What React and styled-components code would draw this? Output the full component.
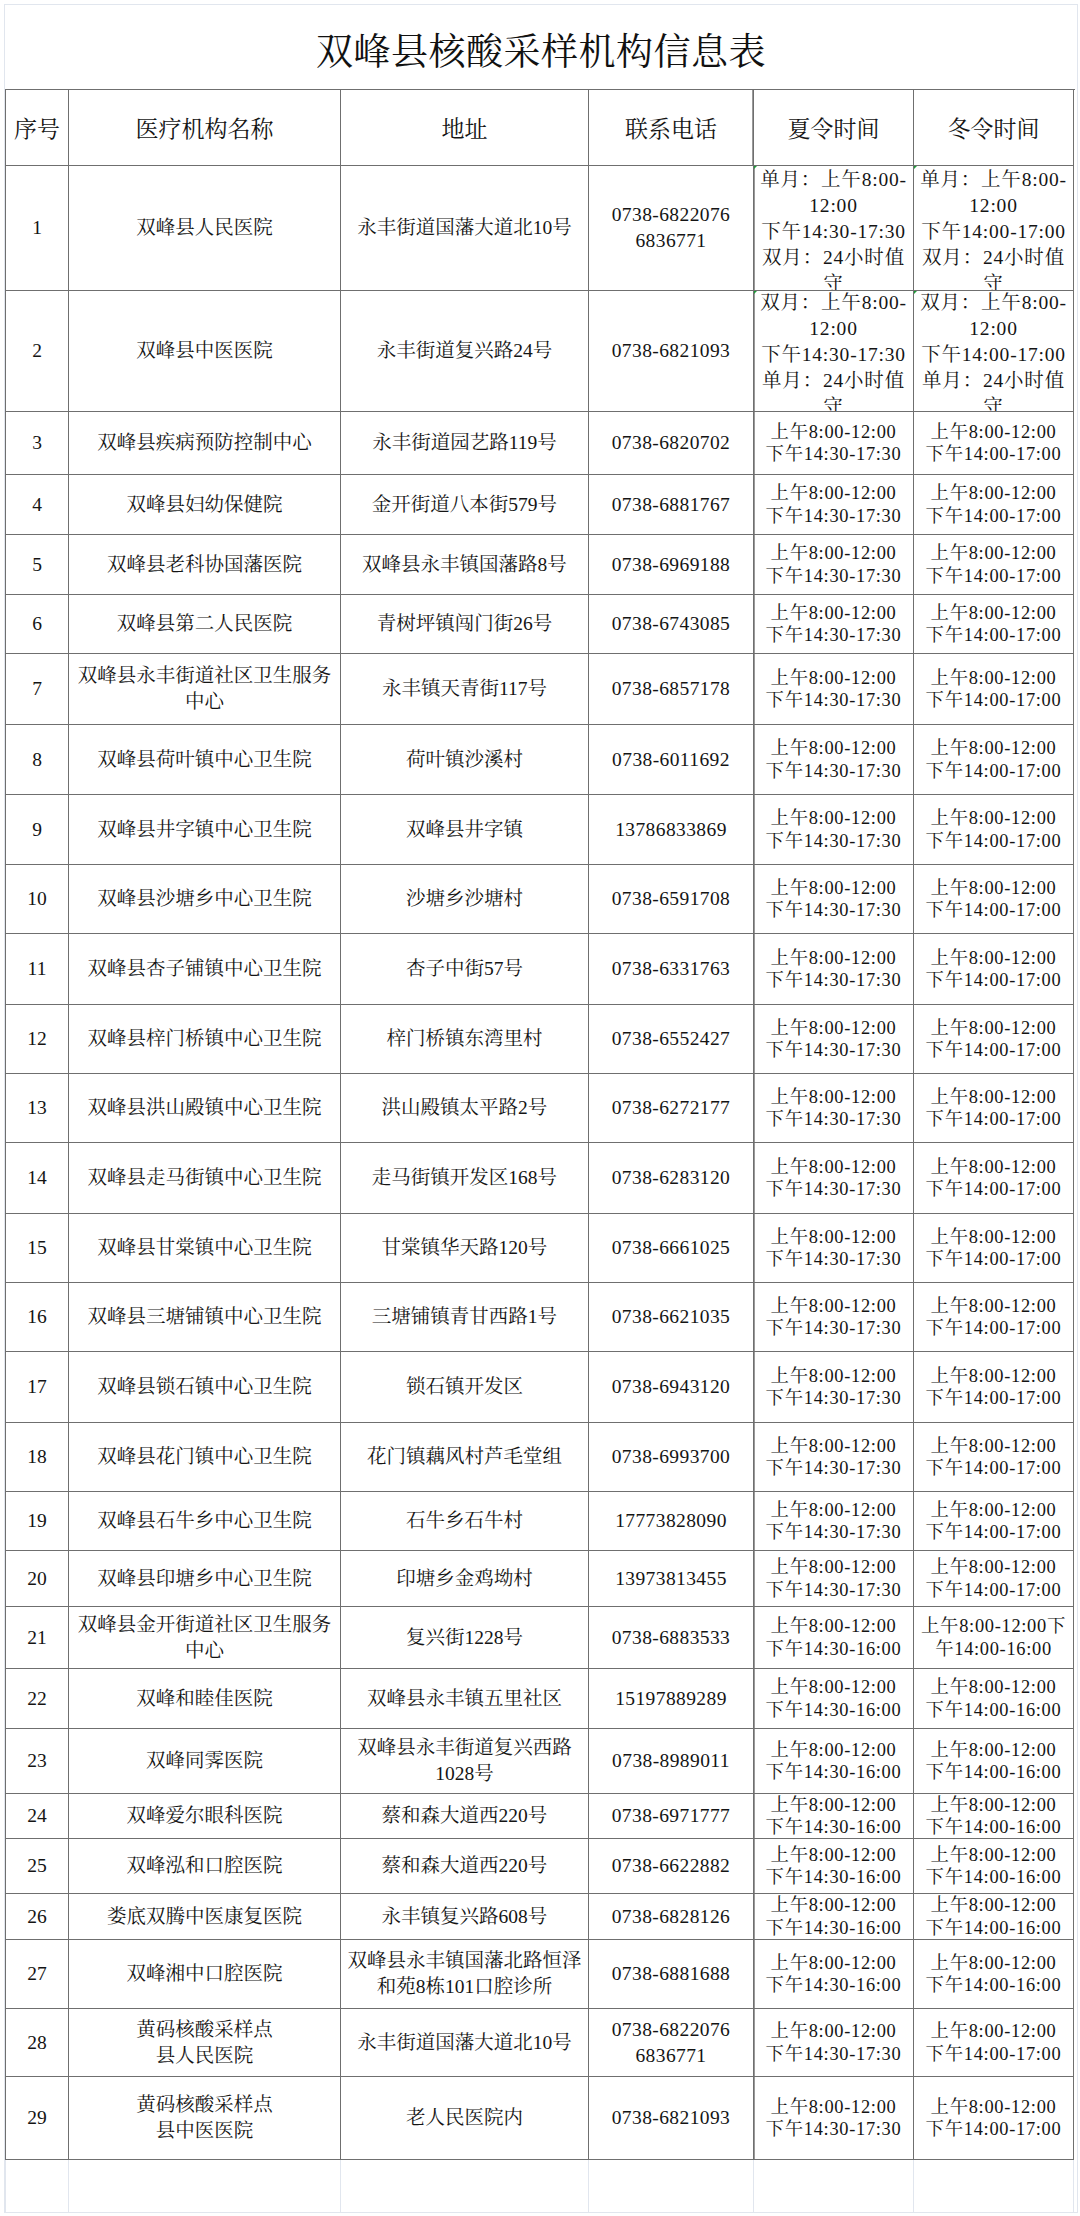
import styled, { createGlobalStyle } from "styled-components";

const GlobalStyle = createGlobalStyle`
  html, body {
    margin: 0;
    padding: 0;
    background: #ffffff;
  }
  body {
    font-family: "Liberation Serif", "Noto Serif CJK SC", "Noto Sans CJK SC", serif;
    color: #111111;
  }
`;

const COLS = "63px 272px 248px 165px 160px 160px";
const LINE = "#6f6f6f";
const FAINT = "#e1e6ee";

const SUMMER = ["上午8:00-12:00", "下午14:30-17:30"];
const WINTER = ["上午8:00-12:00", "下午14:00-17:00"];
const SUMMER_4 = ["上午8:00-12:00", "下午14:30-16:00"];
const WINTER_4 = ["上午8:00-12:00", "下午14:00-16:00"];

const rows = [
  {
    h: 125,
    name: ["双峰县人民医院"],
    addr: ["永丰街道国藩大道北10号"],
    tel: ["0738-6822076", "6836771"],
    summer: ["单月：上午8:00-", "12:00", "下午14:30-17:30", "双月：24小时值", "守"],
    winter: ["单月：上午8:00-", "12:00", "下午14:00-17:00", "双月：24小时值", "守"],
    loose: true,
  },
  {
    h: 121,
    name: ["双峰县中医医院"],
    addr: ["永丰街道复兴路24号"],
    tel: ["0738-6821093"],
    summer: ["双月：上午8:00-", "12:00", "下午14:30-17:30", "单月：24小时值", "守"],
    winter: ["双月：上午8:00-", "12:00", "下午14:00-17:00", "单月：24小时值", "守"],
    loose: true,
  },
  { h: 63, name: ["双峰县疾病预防控制中心"], addr: ["永丰街道园艺路119号"], tel: ["0738-6820702"] },
  { h: 60, name: ["双峰县妇幼保健院"], addr: ["金开街道八本街579号"], tel: ["0738-6881767"] },
  { h: 60, name: ["双峰县老科协国藩医院"], addr: ["双峰县永丰镇国藩路8号"], tel: ["0738-6969188"] },
  { h: 59, name: ["双峰县第二人民医院"], addr: ["青树坪镇闯门街26号"], tel: ["0738-6743085"] },
  { h: 71, name: ["双峰县永丰街道社区卫生服务", "中心"], addr: ["永丰镇天青街117号"], tel: ["0738-6857178"] },
  { h: 70, name: ["双峰县荷叶镇中心卫生院"], addr: ["荷叶镇沙溪村"], tel: ["0738-6011692"] },
  { h: 70, name: ["双峰县井字镇中心卫生院"], addr: ["双峰县井字镇"], tel: ["13786833869"] },
  { h: 69, name: ["双峰县沙塘乡中心卫生院"], addr: ["沙塘乡沙塘村"], tel: ["0738-6591708"] },
  { h: 71, name: ["双峰县杏子铺镇中心卫生院"], addr: ["杏子中街57号"], tel: ["0738-6331763"] },
  { h: 69, name: ["双峰县梓门桥镇中心卫生院"], addr: ["梓门桥镇东湾里村"], tel: ["0738-6552427"] },
  { h: 69, name: ["双峰县洪山殿镇中心卫生院"], addr: ["洪山殿镇太平路2号"], tel: ["0738-6272177"] },
  { h: 71, name: ["双峰县走马街镇中心卫生院"], addr: ["走马街镇开发区168号"], tel: ["0738-6283120"] },
  { h: 69, name: ["双峰县甘棠镇中心卫生院"], addr: ["甘棠镇华天路120号"], tel: ["0738-6661025"] },
  { h: 69, name: ["双峰县三塘铺镇中心卫生院"], addr: ["三塘铺镇青甘西路1号"], tel: ["0738-6621035"] },
  { h: 71, name: ["双峰县锁石镇中心卫生院"], addr: ["锁石镇开发区"], tel: ["0738-6943120"] },
  { h: 69, name: ["双峰县花门镇中心卫生院"], addr: ["花门镇藕风村芦毛堂组"], tel: ["0738-6993700"] },
  { h: 59, name: ["双峰县石牛乡中心卫生院"], addr: ["石牛乡石牛村"], tel: ["17773828090"] },
  { h: 56, name: ["双峰县印塘乡中心卫生院"], addr: ["印塘乡金鸡坳村"], tel: ["13973813455"] },
  {
    h: 62,
    name: ["双峰县金开街道社区卫生服务", "中心"],
    addr: ["复兴街1228号"],
    tel: ["0738-6883533"],
    summer: SUMMER_4,
    winter: ["上午8:00-12:00下", "午14:00-16:00"],
  },
  { h: 60, name: ["双峰和睦佳医院"], addr: ["双峰县永丰镇五里社区"], tel: ["15197889289"], summer: SUMMER_4, winter: WINTER_4 },
  { h: 65, name: ["双峰同霁医院"], addr: ["双峰县永丰街道复兴西路", "1028号"], tel: ["0738-8989011"], summer: SUMMER_4, winter: WINTER_4 },
  { h: 45, name: ["双峰爱尔眼科医院"], addr: ["蔡和森大道西220号"], tel: ["0738-6971777"], summer: SUMMER_4, winter: WINTER_4 },
  { h: 55, name: ["双峰泓和口腔医院"], addr: ["蔡和森大道西220号"], tel: ["0738-6622882"], summer: SUMMER_4, winter: WINTER_4 },
  { h: 46, name: ["娄底双腾中医康复医院"], addr: ["永丰镇复兴路608号"], tel: ["0738-6828126"], summer: SUMMER_4, winter: WINTER_4 },
  {
    h: 69,
    name: ["双峰湘中口腔医院"],
    addr: ["双峰县永丰镇国藩北路恒泽", "和苑8栋101口腔诊所"],
    tel: ["0738-6881688"],
    summer: SUMMER_4,
    winter: WINTER_4,
  },
  { h: 68, name: ["黄码核酸采样点", "县人民医院"], addr: ["永丰街道国藩大道北10号"], tel: ["0738-6822076", "6836771"] },
  { h: 83, name: ["黄码核酸采样点", "县中医医院"], addr: ["老人民医院内"], tel: ["0738-6821093"] },
];

const headers = ["序号", "医疗机构名称", "地址", "联系电话", "夏令时间", "冬令时间"];

const Lines = ({ items }) => items.map((t, i) => <Line key={i}>{t}</Line>);

const App = () => {
  return (
    <>
      <GlobalStyle />
      <Sheet>
        <Title>双峰县核酸采样机构信息表</Title>
        <Table>
          <Row $h={76}>
            {headers.map((h, i) => (
              <HeadCell key={h} $split={i === 3}>
                {h}
              </HeadCell>
            ))}
          </Row>
          {rows.map((r, i) => (
            <Row key={i} $h={r.h}>
              <Cell>{i + 1}</Cell>
              <Cell>
                <Lines items={r.name} />
              </Cell>
              <Cell>
                <Lines items={r.addr} />
              </Cell>
              <PhoneCell>
                <Lines items={r.tel} />
              </PhoneCell>
              <TimeCell $loose={r.loose} $split>
                <Lines items={r.summer || SUMMER} />
              </TimeCell>
              <TimeCell $loose={r.loose}>
                <Lines items={r.winter || WINTER} />
              </TimeCell>
            </Row>
          ))}
        </Table>
        <Filler>
          {headers.map((h) => (
            <FillerCell key={h} />
          ))}
        </Filler>
      </Sheet>
    </>
  );
};

const Sheet = styled.div`
  margin: 4px 0 0 4px;
  width: 1074px;
  box-sizing: border-box;
  border: 1px solid ${FAINT};
  background: #ffffff;
`;

const Title = styled.div`
  height: 84px;
  display: flex;
  align-items: center;
  justify-content: center;
  padding-top: 3px;
  box-sizing: border-box;
  font-family: "Noto Serif CJK SC", "Noto Sans CJK SC", serif;
  font-size: 37px;
  letter-spacing: 0.5px;
  color: #111111;
`;

const Table = styled.div`
  width: 1069px;
  border-top: 1px solid ${LINE};
  border-left: 1px solid ${LINE};
`;

const Row = styled.div`
  display: grid;
  grid-template-columns: ${COLS};
  height: ${(p) => p.$h}px;
`;

const Cell = styled.div`
  position: relative;
  display: flex;
  flex-direction: column;
  align-items: center;
  justify-content: center;
  overflow: hidden;
  text-align: center;
  border-right: 1px solid ${LINE};
  border-bottom: 1px solid ${LINE};
  font-size: 19.5px;
  line-height: 26px;
  color: #141414;
`;

const HeadCell = styled(Cell)`
  font-size: 23px;
  line-height: 28px;
  padding-top: 4px;
  box-shadow: ${(p) => (p.$split ? `inset -1px 0 0 #9a9a9a` : "none")};
`;

const PhoneCell = styled(Cell)`
  letter-spacing: 0.4px;
`;

const TimeCell = styled(Cell)`
  font-size: ${(p) => (p.$loose ? 19.5 : 18.4)}px;
  line-height: ${(p) => (p.$loose ? 26 : 22.4)}px;
  padding-top: ${(p) => (p.$loose ? 8 : 0)}px;
  letter-spacing: ${(p) => (p.$loose ? 0.8 : 0.7)}px;
  box-shadow: ${(p) => (p.$split ? `inset 1px 0 0 #9a9a9a` : "none")};

  &::before {
    content: "";
    display: ${(p) => (p.$loose ? "block" : "none")};
    position: absolute;
    top: 0;
    left: 0;
    border-top: 3px solid #1f9b3a;
    border-right: 3px solid transparent;
  }
`;

const Line = styled.span`
  display: block;
  white-space: nowrap;
`;

const Filler = styled.div`
  display: grid;
  grid-template-columns: ${COLS};
  height: 52px;
  border-left: 1px solid ${FAINT};
  width: 1069px;
`;

const FillerCell = styled.div`
  border-right: 1px solid ${FAINT};
`;

export default App;
